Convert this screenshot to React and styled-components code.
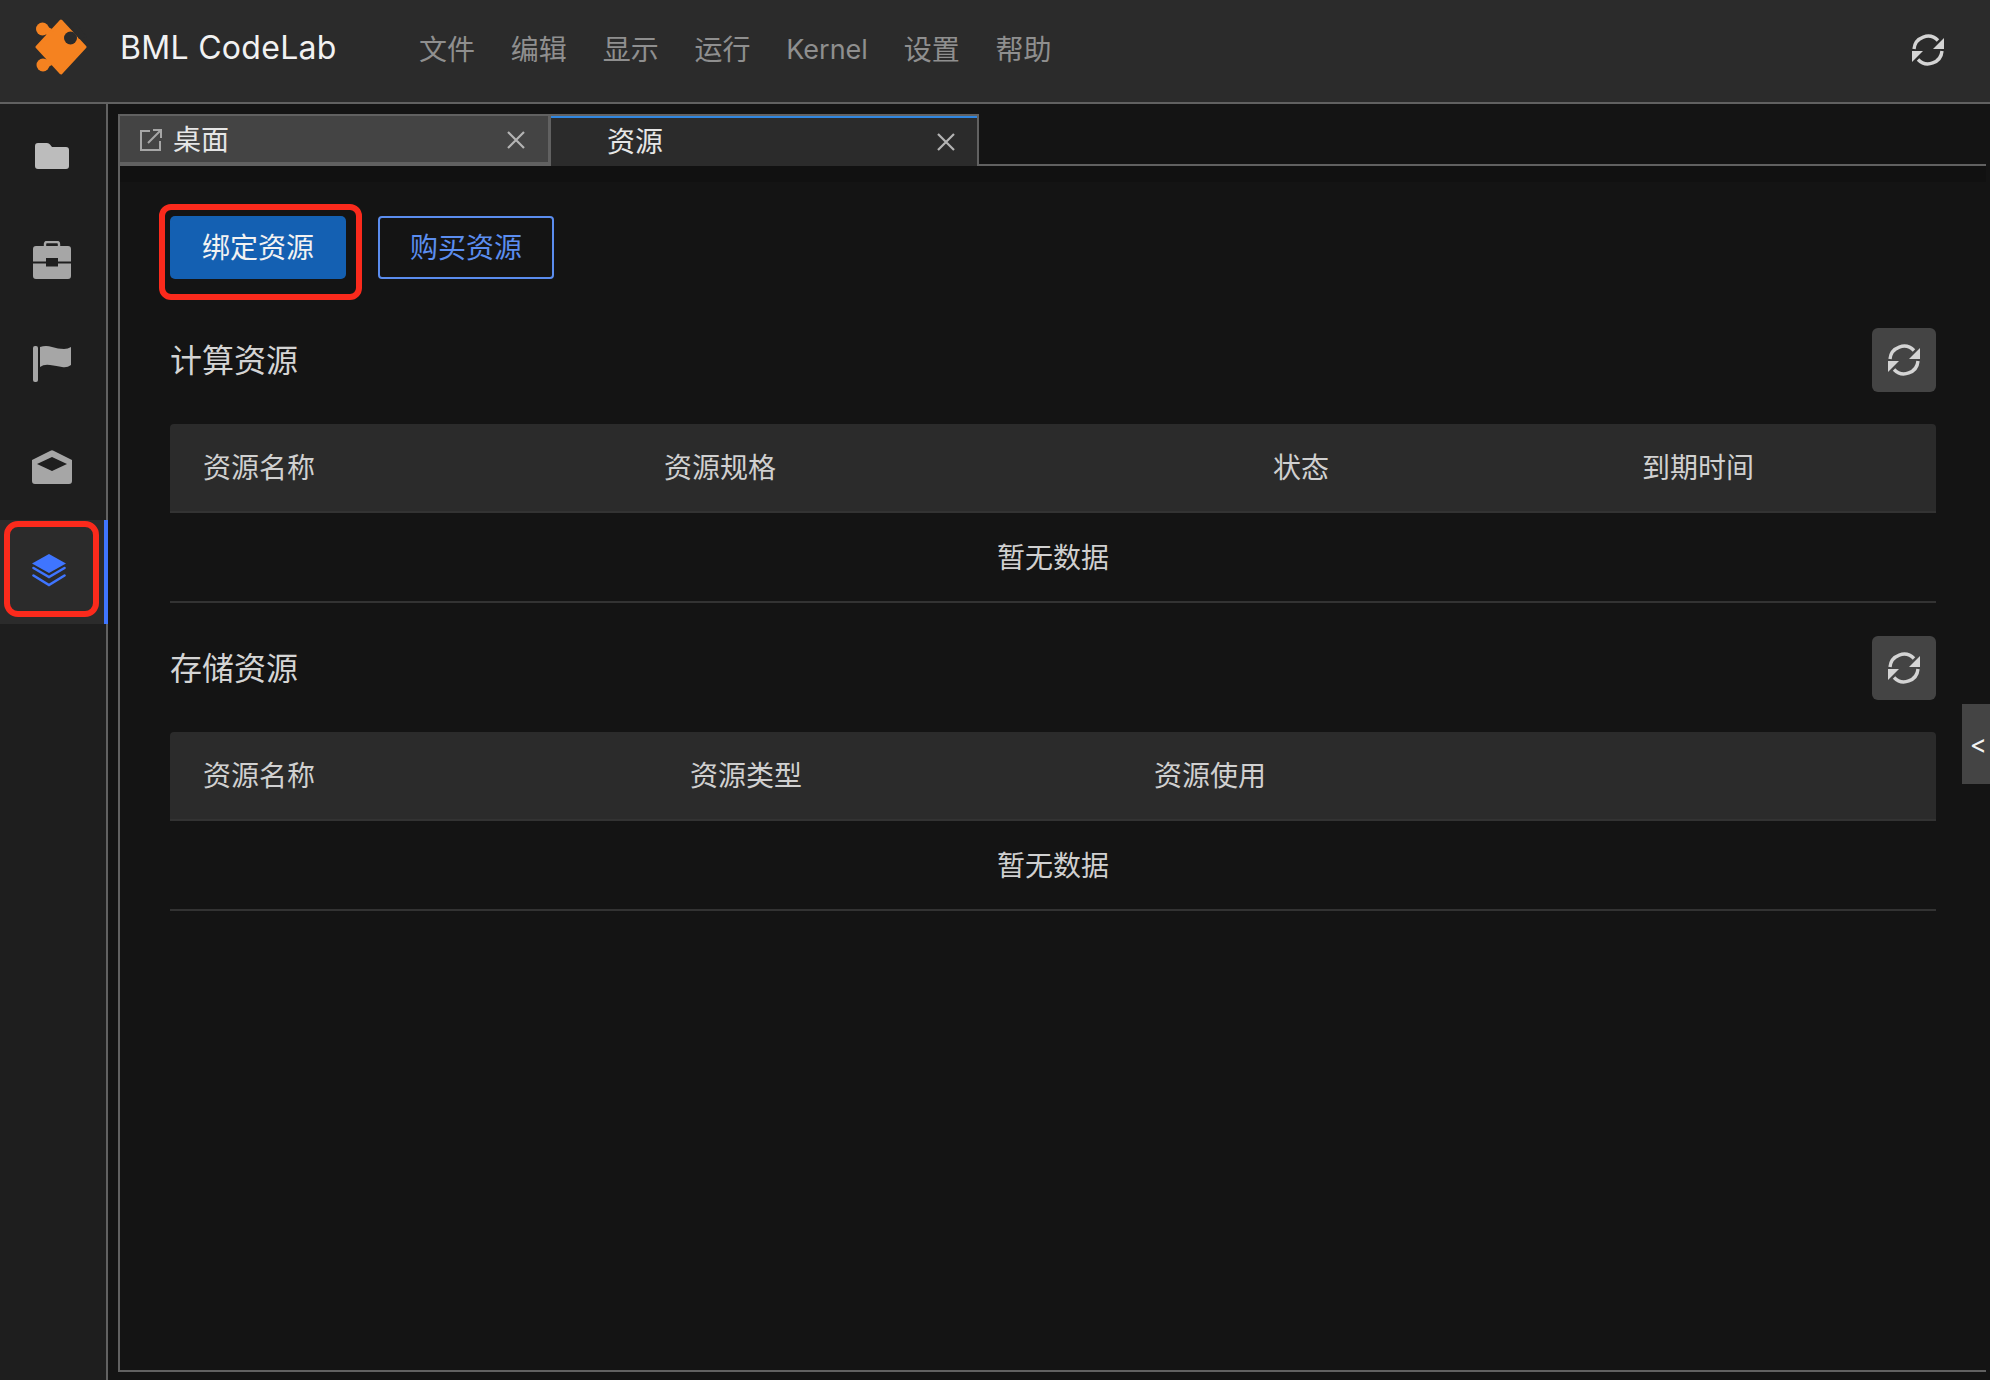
import styled, { createGlobalStyle } from 'styled-components';

const GlobalStyle = createGlobalStyle`
    html, body {
        margin: 0;
        padding: 0;
        background: #141414;
    }
    *, *::before, *::after {
        box-sizing: border-box;
    }
`;

const FONT = `Inter, "Noto Sans CJK SC", sans-serif`;

const menus = ['文件', '编辑', '显示', '运行', 'Kernel', '设置', '帮助'];

const computeColumns = [
    { title: '资源名称', width: 461 },
    { title: '资源规格', width: 609 },
    { title: '状态', width: 369 },
    { title: '到期时间', width: 327 },
];

const storageColumns = [
    { title: '资源名称', width: 487 },
    { title: '资源类型', width: 464 },
    { title: '资源使用', width: 815 },
];

const Logo = () => (
    <svg width="54" height="56" viewBox="0 0 54 56">
        <circle cx="7.5" cy="10" r="6.5" fill="#f58220" />
        <circle cx="8" cy="46" r="6.5" fill="#f58220" />
        <path d="M9 6 L17 10 L12 18 Z M9 50 L17 46 L12 38 Z" fill="#f58220" />
        <polygon
            points="2,28 26,2 50,28 26,54"
            fill="#f58220"
            stroke="#f58220"
            strokeWidth="3"
            strokeLinejoin="round"
        />
        <path d="M34 4 L42 6 L52 18 L44 20 Z" fill="#2b2b2b" />
        <circle cx="35.5" cy="19" r="6.5" fill="#2b2b2b" />
    </svg>
);

const RefreshIcon = () => (
    <svg width="32" height="32" viewBox="0 0 32 32" fill="none">
        <path d="M2 15 A14 14 0 0 1 26 6.5" stroke="#d4d4d4" strokeWidth="3.4" />
        <path d="M32 4 V15 H21 Z" fill="#d4d4d4" />
        <path d="M30 17 A14 14 0 0 1 6 25.5" stroke="#d4d4d4" strokeWidth="3.4" />
        <path d="M0 28 V17 H11 Z" fill="#d4d4d4" />
    </svg>
);

const CloseIcon = () => (
    <svg width="20" height="20" viewBox="0 0 20 20" fill="none">
        <path d="M2 2 L18 18 M18 2 L2 18" stroke="#b4b4b4" strokeWidth="2.2" />
    </svg>
);

const OpenIcon = () => (
    <svg width="22" height="22" viewBox="0 0 22 22" fill="none" stroke="#a6a6a6" strokeWidth="2">
        <path d="M10 2 H1 V21 H20 V12" />
        <path d="M8 14 L20 2 M13 1 H21 V9" />
    </svg>
);

const FolderIcon = () => (
    <svg width="34" height="26" viewBox="0 0 34 26">
        <path
            d="M3 0 H12 Q14 0 15 1.5 L17 4 H31 Q34 4 34 7 V23 Q34 26 31 26 H3 Q0 26 0 23 V3 Q0 0 3 0 Z"
            fill="#bcbcbc"
        />
    </svg>
);

const CaseIcon = () => (
    <svg width="38" height="38" viewBox="0 0 38 38">
        <path
            d="M12 6 V3 Q12 1 14 1 H24 Q26 1 26 3 V6"
            fill="none"
            stroke="#a6a6a6"
            strokeWidth="2.4"
        />
        <path d="M3 5 H35 Q38 5 38 8 V20.5 H25 V17 H13 V20.5 H0 V8 Q0 5 3 5 Z" fill="#a6a6a6" />
        <path d="M0 22.5 H13 V25.5 H25 V22.5 H38 V35 Q38 38 35 38 H3 Q0 38 0 35 Z" fill="#a6a6a6" />
    </svg>
);

const FlagIcon = () => (
    <svg width="40" height="38" viewBox="0 0 40 38">
        <rect x="1" y="1" width="5" height="36" rx="2" fill="#a6a6a6" />
        <path
            d="M8 2 Q14 0 20 2 T32 4 Q36 4 39 2 V20 Q35 23 30 22 T18 20 Q12 19 8 22 Z"
            fill="#a6a6a6"
        />
    </svg>
);

const MailIcon = () => (
    <svg width="40" height="34" viewBox="0 0 40 34">
        <path
            d="M18.5 0.7 Q20 0 21.5 0.7 L40 10 V31 Q40 34 37 34 H3 Q0 34 0 31 V10 Z M20 7 L5 14 L20 21 L35 14 Z"
            fill="#a6a6a6"
            fillRule="evenodd"
        />
    </svg>
);

const LayersIcon = () => (
    <svg width="34" height="33" viewBox="0 0 34 33" fill="none">
        <path d="M17 0 L34 9.5 L17 19 L0 9.5 Z" fill="#3f75ff" />
        <path d="M1.5 14 L17 23 L32.5 14" stroke="#3f75ff" strokeWidth="2.6" strokeLinecap="round" />
        <path d="M1.5 21.5 L17 31 L32.5 21.5" stroke="#3f75ff" strokeWidth="2.6" strokeLinecap="round" />
    </svg>
);

const DataTable = ({ columns }) => (
    <Table>
        <TableHead>
            {columns.map((col) => (
                <HeadCell key={col.title} style={{ width: col.width }}>
                    {col.title}
                </HeadCell>
            ))}
        </TableHead>
        <EmptyRow>暂无数据</EmptyRow>
    </Table>
);

const App = () => {
    return (
        <Page>
            <GlobalStyle />
            <Header>
                <LogoWrap>
                    <Logo />
                </LogoWrap>
                <Brand>BML CodeLab</Brand>
                <Menu>
                    {menus.map((item) => (
                        <MenuItem key={item} $latin={item === 'Kernel'}>
                            {item}
                        </MenuItem>
                    ))}
                </Menu>
                <HeaderRefresh>
                    <RefreshIcon />
                </HeaderRefresh>
            </Header>

            <Body>
                <Sidebar>
                    <SideItem>
                        <FolderIcon />
                    </SideItem>
                    <SideItem>
                        <CaseIcon />
                    </SideItem>
                    <SideItem>
                        <FlagIcon />
                    </SideItem>
                    <SideItem $lift="3px">
                        <MailIcon />
                    </SideItem>
                    <SideItem $active $lift="4px">
                        <LayersIcon />
                    </SideItem>
                </Sidebar>

                <Main>
                    <Panel>
                        <TabBar>
                            <Tab>
                                <TabIcon>
                                    <OpenIcon />
                                </TabIcon>
                                <TabLabel>桌面</TabLabel>
                                <CloseIcon />
                            </Tab>
                            <Tab $active>
                                <TabIcon />
                                <TabLabel>资源</TabLabel>
                                <CloseIcon />
                            </Tab>
                        </TabBar>
                        <TabShadow />
                        <Content>
                            <Actions>
                                <PrimaryButton>绑定资源</PrimaryButton>
                                <GhostButton>购买资源</GhostButton>
                            </Actions>

                            <SectionHead>
                                <SectionTitle>计算资源</SectionTitle>
                                <IconButton>
                                    <RefreshIcon />
                                </IconButton>
                            </SectionHead>
                            <DataTable columns={computeColumns} />

                            <SectionHead>
                                <SectionTitle>存储资源</SectionTitle>
                                <IconButton>
                                    <RefreshIcon />
                                </IconButton>
                            </SectionHead>
                            <DataTable columns={storageColumns} />
                        </Content>
                    </Panel>
                    <SideHandle>&lt;</SideHandle>
                </Main>
            </Body>
        </Page>
    );
};

const Page = styled.div`
    width: 1990px;
    height: 1380px;
    display: flex;
    flex-direction: column;
    overflow: hidden;
    background: #141414;
    font-family: ${FONT};
`;

const Header = styled.header`
    height: 104px;
    flex: none;
    display: flex;
    align-items: center;
    padding: 0 46px 8px 35px;
    background: #2b2b2b;
    border-bottom: 2px solid #616161;
`;

const LogoWrap = styled.div`
    width: 85px;
    display: flex;
`;

const Brand = styled.div`
    width: 299px;
    font-size: 32px;
    color: #f2f2f2;
    letter-spacing: 0.3px;
`;

const Menu = styled.nav`
    display: flex;
    align-items: center;
    gap: 35.8px;
    margin-top: 5px;
`;

const MenuItem = styled.span`
    font-size: ${(props) => (props.$latin ? '27px' : '28px')};
    line-height: 40px;
    color: #8f8f8f;
`;

const HeaderRefresh = styled.div`
    margin: 6px 0 0 auto;
    display: flex;
`;

const Body = styled.div`
    flex: 1;
    display: flex;
    min-height: 0;
`;

const Sidebar = styled.aside`
    width: 108px;
    flex: none;
    background: #1e1e1e;
    border-right: 2px solid #616161;
`;

const SideItem = styled.div`
    position: relative;
    height: 104px;
    display: flex;
    align-items: center;
    justify-content: center;
    padding-right: ${(props) => (props.$active ? '6px' : '2px')};
    padding-bottom: ${(props) => props.$lift || '0'};
    margin-right: ${(props) => (props.$active ? '-2px' : '0')};
    background: ${(props) => (props.$active ? '#2b2b2b' : 'transparent')};
    border-right: ${(props) => (props.$active ? '4px solid #3f75ff' : 'none')};

    ${(props) =>
        props.$active &&
        `
        &::after {
            content: '';
            position: absolute;
            top: 1px;
            left: 4px;
            width: 95px;
            height: 96px;
            border: 6px solid #fb2a1c;
            border-radius: 14px;
        }
    `}
`;

const Main = styled.main`
    position: relative;
    flex: 1;
    min-width: 0;
    padding: 10px 4px 8px 10px;
`;

const Panel = styled.div`
    height: 100%;
    display: flex;
    flex-direction: column;
    border-left: 2px solid #616161;
    border-bottom: 2px solid #616161;
`;

const TabBar = styled.div`
    height: 52px;
    flex: none;
    display: flex;
    border-bottom: 2px solid #616161;
`;

const Tab = styled.div`
    position: relative;
    width: ${(props) => (props.$active ? '430px' : '432px')};
    height: ${(props) => (props.$active ? '52px' : '50px')};
    margin-left: ${(props) => (props.$active ? '-1px' : '-2px')};
    display: flex;
    align-items: center;
    padding: ${(props) => (props.$active ? '2px 21px 0 23px' : '2px 22px 0 20px')};
    color: #e6e6e6;
    background: ${(props) => (props.$active ? '#2b2b2b' : '#444444')};
    border: 2px solid #616161;
    border-bottom: ${(props) => (props.$active ? 'none' : '2px solid #616161')};

    ${(props) =>
        props.$active &&
        `
        &::before {
            content: '';
            position: absolute;
            top: 0;
            left: 0;
            right: 0;
            height: 2px;
            background: #2f86e0;
        }
    `}
`;

const TabIcon = styled.span`
    width: 33px;
    display: flex;
`;

const TabLabel = styled.span`
    flex: 1;
    padding-bottom: 5px;
    font-size: 28px;
`;

const TabShadow = styled.div`
    height: 16px;
    flex: none;
    background: #111111;
`;

const Content = styled.div`
    flex: 1;
    padding: 34px 50px 0;
`;

const Actions = styled.div`
    display: flex;
    gap: 32px;
`;

const PrimaryButton = styled.button`
    position: relative;
    width: 176px;
    height: 63px;
    padding: 0 0 3px;
    border: none;
    border-radius: 5px;
    background: #1460b2;
    color: #f2f2f2;
    font: 28px ${FONT};

    &::after {
        content: '';
        position: absolute;
        top: -12px;
        left: -11px;
        width: 203px;
        height: 96px;
        border: 6px solid #fb2a1c;
        border-radius: 12px;
    }
`;

const GhostButton = styled.button`
    width: 176px;
    height: 63px;
    padding: 0 0 3px;
    border: 2px solid #5b8def;
    border-radius: 4px;
    background: transparent;
    color: #5b8def;
    font: 28px ${FONT};
`;

const SectionHead = styled.div`
    display: flex;
    align-items: center;
    justify-content: space-between;
    margin: 49px 0 32px;

    & + div + & {
        margin-top: 33px;
    }
`;

const SectionTitle = styled.h2`
    margin: 0;
    padding-bottom: 4px;
    font-size: 32px;
    font-weight: 400;
    color: #d4d4d4;
`;

const IconButton = styled.div`
    width: 64px;
    height: 64px;
    display: flex;
    align-items: center;
    justify-content: center;
    border-radius: 6px;
    background: #444444;
`;

const Table = styled.div`
    display: flex;
    flex-direction: column;
`;

const TableHead = styled.div`
    height: 89px;
    display: flex;
    align-items: center;
    padding-bottom: 3px;
    background: #2b2b2b;
    border-radius: 4px 4px 0 0;
    border-bottom: 2px solid #333333;
`;

const HeadCell = styled.div`
    padding-left: 33px;
    font-size: 28px;
    color: #d0d0d0;
`;

const EmptyRow = styled.div`
    height: 90px;
    display: flex;
    align-items: center;
    justify-content: center;
    padding-bottom: 2px;
    font-size: 28px;
    color: #d0d0d0;
    border-bottom: 2px solid #333333;
`;

const SideHandle = styled.div`
    position: absolute;
    top: 600px;
    right: 0;
    width: 28px;
    height: 80px;
    display: flex;
    align-items: center;
    justify-content: flex-end;
    padding-right: 3px;
    background: #444444;
    color: #f2f2f2;
    font-size: 26px;
`;

export default App;
